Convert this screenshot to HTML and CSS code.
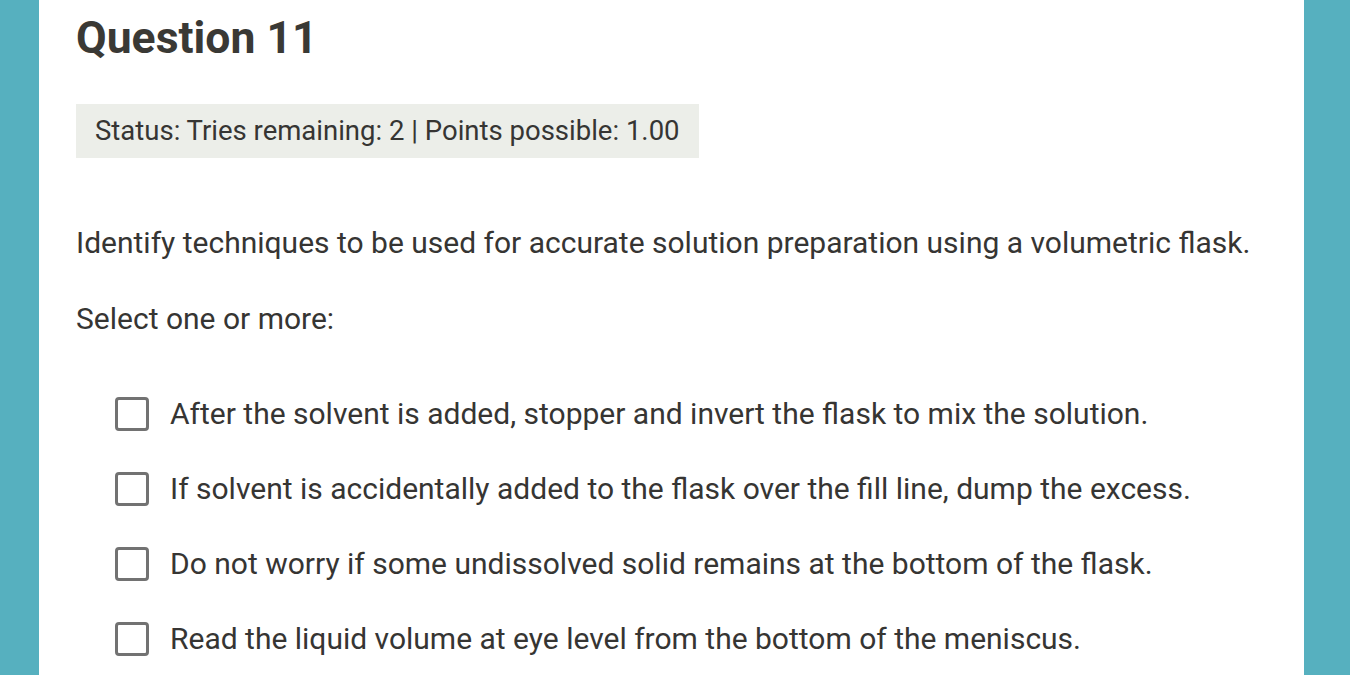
FILE: index.html
```html
<!DOCTYPE html>
<html>
<head>
<meta charset="utf-8">
<link rel="stylesheet" href="styles.css">
</head>
<body>
<div class="page">
  <main class="card">
    <h1 class="title">Question 11</h1>
    <div class="status">Status: Tries remaining: 2 | Points possible: 1.00</div>
    <p class="prompt">Identify techniques to be used for accurate solution preparation using a volumetric flask.</p>
    <p class="select">Select one or more:</p>
    <ul class="options">
      <li class="option"><span class="box"></span><span>After the solvent is added, stopper and invert the flask to mix the solution.</span></li>
      <li class="option"><span class="box"></span><span>If solvent is accidentally added to the flask over the fill line, dump the excess.</span></li>
      <li class="option"><span class="box"></span><span>Do not worry if some undissolved solid remains at the bottom of the flask.</span></li>
      <li class="option"><span class="box"></span><span>Read the liquid volume at eye level from the bottom of the meniscus.</span></li>
    </ul>
  </main>
</div>
</body>
</html>
```

FILE: styles.css
```css
html, body {
  margin: 0;
  padding: 0;
  height: 100%;
  overflow: hidden;
}
body {
  background: #56b0bf;
  font-family: Roboto, "Noto Sans", sans-serif;
  color: #363533;
}
.page {
  display: flex;
  height: 100%;
  padding-left: 39px;
}
.card {
  width: 1265px;
  background: #ffffff;
  padding: 0 37px;
  box-sizing: border-box;
}
.title {
  margin: 0;
  padding-top: 10px;
  font-size: 44.5px;
  line-height: 56px;
  font-weight: 700;
  color: #3a3935;
}
.status {
  display: inline-block;
  margin-top: 38px;
  background: #eceee9;
  font-size: 27.5px;
  line-height: 54px;
  padding: 0 19px;
}
.prompt {
  margin: 65px 0 0;
  font-size: 30px;
  line-height: 40px;
}
.select {
  margin: 36px 0 0;
  font-size: 30px;
  line-height: 40px;
}
.options {
  list-style: none;
  margin: 37px 0 0;
  padding: 0 0 0 39px;
}
.option {
  display: flex;
  align-items: center;
  gap: 21px;
  font-size: 30px;
  line-height: 40px;
  height: 75px;
}
.box {
  width: 28px;
  height: 28px;
  border: 3px solid #727272;
  border-radius: 4px;
  flex: none;
}
```
